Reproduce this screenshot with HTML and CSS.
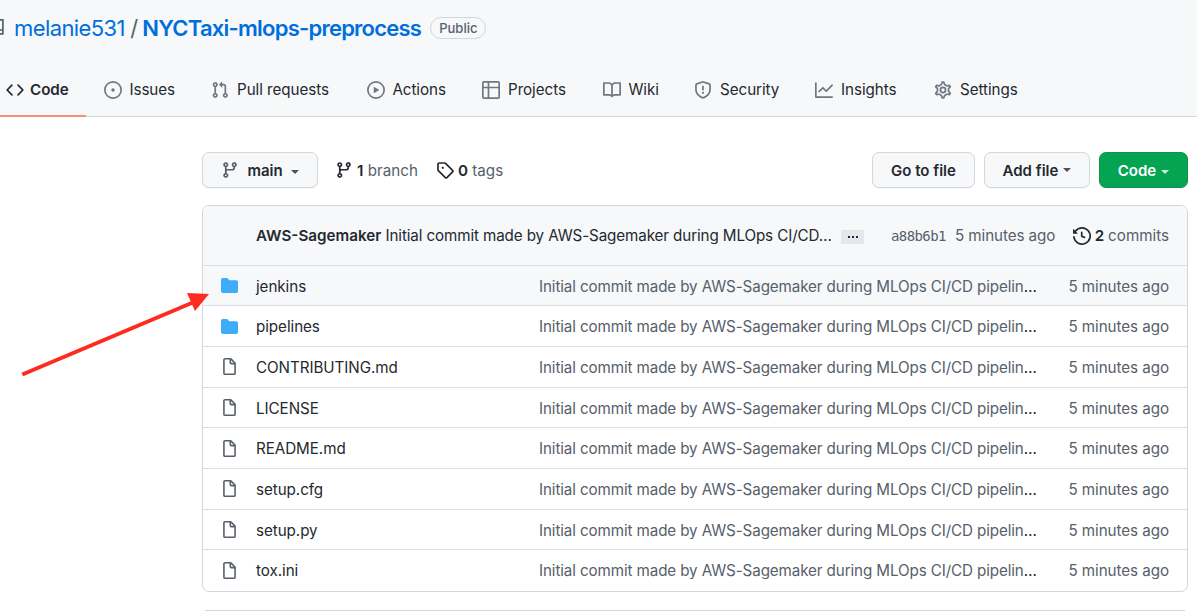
FILE: index.html
```html
<!DOCTYPE html>
<html lang="en">
<head>
<meta charset="utf-8">
<title>melanie531/NYCTaxi-mlops-preprocess</title>
<link rel="stylesheet" href="styles.css">
</head>
<body>
<svg class="defs" width="0" height="0">
  <symbol id="branch" viewBox="0 0 16 16"><path fill-rule="evenodd" d="M11.75 2.5a.75.75 0 100 1.5.75.75 0 000-1.5zm-2.25.75a2.25 2.25 0 113 2.122V6A2.5 2.5 0 0110 8.5H6a1 1 0 00-1 1v1.128a2.251 2.251 0 11-1.5 0V5.372a2.25 2.25 0 111.5 0v1.836A2.492 2.492 0 016 7h4a1 1 0 001-1v-.628A2.25 2.25 0 019.5 3.25zM4.25 12a.75.75 0 100 1.5.75.75 0 000-1.5zM3.5 3.25a.75.75 0 111.5 0 .75.75 0 01-1.5 0z"/></symbol>
  <symbol id="folder" viewBox="0 0 16 16"><path d="M1.75 1A1.75 1.75 0 000 2.75v10.5C0 14.216.784 15 1.75 15h12.5A1.75 1.75 0 0016 13.25v-8.5A1.75 1.75 0 0014.25 3h-6.5a.25.25 0 01-.2-.1l-.9-1.2c-.33-.44-.85-.7-1.4-.7h-3.5z"/></symbol>
  <symbol id="file" viewBox="0 0 16 16"><path fill-rule="evenodd" d="M3.75 1.5a.25.25 0 00-.25.25v12.5c0 .138.112.25.25.25h8.5a.25.25 0 00.25-.25V6H9.75A1.75 1.75 0 018 4.25V1.5H3.75zm5.75.56v2.19c0 .138.112.25.25.25h2.19L9.5 2.06zM2 1.75C2 .784 2.784 0 3.75 0h5.086c.464 0 .909.184 1.237.513l3.414 3.414c.329.328.513.773.513 1.237v9.086A1.75 1.75 0 0112.25 16h-8.5A1.75 1.75 0 012 14.25V1.75z"/></symbol>
</svg>

<header class="head">
  <div class="title">
    <svg class="icon repo" viewBox="0 0 16 16"><path fill-rule="evenodd" d="M2 2.5A2.5 2.5 0 014.500 0h8.750a.75.75 0 01.75.75v12.500a.75.75 0 01-.75.75h-2.500a.75.75 0 110-1.500h1.750v-2h-8a1 1 0 00-.714 1.700.75.75 0 01-1.072 1.050A2.495 2.495 0 012 11.500v-9zm10.500-1h-8a1 1 0 00-1 1v6.708A2.486 2.486 0 014.500 9h8V1.500z"/></svg>
    <a class="owner">melanie531</a><span class="slash">/</span><a class="name">NYCTaxi-mlops-preprocess</a>
    <span class="public">Public</span>
  </div>
  <nav class="tabs">
    <a class="tab t-code"><svg class="icon" viewBox="0 0 16 16"><path d="M4.72 3.22a.75.75 0 011.06 1.06L2.06 8l3.72 3.72a.75.75 0 11-1.06 1.06L.47 8.53a.75.75 0 010-1.06l4.25-4.25zm6.56 0a.75.75 0 10-1.06 1.06L13.94 8l-3.72 3.72a.75.75 0 101.06 1.06l4.25-4.25a.75.75 0 000-1.06l-4.25-4.25z"/></svg>Code</a>
    <a class="tab t-issues"><svg class="icon" viewBox="0 0 16 16"><path fill-rule="evenodd" d="M8 9.5a1.5 1.5 0 100-3 1.5 1.5 0 000 3zM8 0a8 8 0 100 16A8 8 0 008 0zM1.5 8a6.5 6.5 0 1113 0 6.5 6.5 0 01-13 0z"/></svg>Issues</a>
    <a class="tab t-pulls"><svg class="icon" viewBox="0 0 16 16"><path fill-rule="evenodd" d="M7.177 3.073L9.573.677A.25.25 0 0110 .854v4.792a.25.25 0 01-.427.177L7.177 3.427a.25.25 0 010-.354zM3.75 2.5a.75.75 0 100 1.5.75.75 0 000-1.5zm-2.25.75a2.25 2.25 0 113 2.122v5.256a2.251 2.251 0 11-1.5 0V5.372A2.25 2.25 0 011.5 3.25zM11 2.5h-1V4h1a1 1 0 011 1v5.628a2.251 2.251 0 101.5 0V5A2.5 2.5 0 0011 2.5zm1 10.25a.75.75 0 111.5 0 .75.75 0 01-1.5 0zM3.75 12a.75.75 0 100 1.5.75.75 0 000-1.5z"/></svg>Pull requests</a>
    <a class="tab t-actions"><svg class="icon" viewBox="0 0 16 16"><path fill-rule="evenodd" d="M1.5 8a6.5 6.5 0 1113 0 6.5 6.5 0 01-13 0zM8 0a8 8 0 100 16A8 8 0 008 0zM6.379 5.227A.25.25 0 006 5.442v5.117a.25.25 0 00.379.214l4.264-2.559a.25.25 0 000-.428L6.379 5.227z"/></svg>Actions</a>
    <a class="tab t-projects"><svg class="icon" viewBox="0 0 16 16"><path fill-rule="evenodd" d="M0 1.75C0 .784.784 0 1.75 0h12.5C15.216 0 16 .784 16 1.75v12.5A1.75 1.75 0 0114.25 16H1.75A1.75 1.75 0 010 14.25V1.75zM1.5 6.5v7.75c0 .138.112.25.25.25H5v-8H1.5zM5 5H1.5V1.75a.25.25 0 01.25-.25H5V5zm1.5 1.5v8h7.75a.25.25 0 00.25-.25V6.5h-8zm8-1.5h-8V1.5h7.75a.25.25 0 01.25.25V5z"/></svg>Projects</a>
    <a class="tab t-wiki"><svg class="icon" viewBox="0 0 16 16"><path fill-rule="evenodd" d="M0 1.75A.75.75 0 01.75 1h4.253c1.227 0 2.317.59 3 1.501A3.744 3.744 0 0111.006 1h4.245a.75.75 0 01.75.75v10.5a.75.75 0 01-.75.75h-4.507a2.25 2.25 0 00-1.591.659l-.622.621a.75.75 0 01-1.06 0l-.622-.621A2.25 2.25 0 005.258 13H.75a.75.75 0 01-.75-.75V1.75zm8.755 3a2.25 2.25 0 012.25-2.25H14.5v9h-3.757c-.71 0-1.4.201-1.992.572l.004-7.322zm-1.504 7.324l.004-5.073-.002-2.253A2.25 2.25 0 005.003 2.5H1.5v9h3.757a3.75 3.75 0 011.994.574z"/></svg>Wiki</a>
    <a class="tab t-security"><svg class="icon" viewBox="0 0 16 16"><path fill-rule="evenodd" d="M7.467.133a1.75 1.75 0 011.066 0l5.25 1.68A1.75 1.75 0 0115 3.48V7c0 1.566-.32 3.182-1.303 4.682-.983 1.498-2.585 2.813-5.032 3.855a1.7 1.7 0 01-1.33 0c-2.447-1.042-4.049-2.357-5.032-3.855C1.32 10.182 1 8.566 1 7V3.48a1.75 1.75 0 011.217-1.667l5.25-1.68zm.61 1.429a.25.25 0 00-.153 0l-5.25 1.68a.25.25 0 00-.174.238V7c0 1.358.275 2.666 1.057 3.86.784 1.194 2.121 2.34 4.366 3.297a.2.2 0 00.154 0c2.245-.956 3.582-2.104 4.366-3.298C13.225 9.666 13.5 8.36 13.5 7V3.48a.25.25 0 00-.174-.237l-5.25-1.68zM9 10.5a1 1 0 11-2 0 1 1 0 012 0zm-.25-5.75a.75.75 0 10-1.5 0v3a.75.75 0 001.5 0v-3z"/></svg>Security</a>
    <a class="tab t-insights"><svg class="icon" viewBox="0 0 16 16"><path d="M1.5 1.75a.75.75 0 00-1.5 0v12.5c0 .414.336.75.75.75h14.5a.75.75 0 000-1.5H1.5V1.75zm14.28 2.53a.75.75 0 00-1.06-1.06L10 7.94 7.53 5.47a.75.75 0 00-1.06 0L3.22 8.72a.75.75 0 001.06 1.06L7 7.06l2.47 2.47a.75.75 0 001.06 0l5.25-5.25z"/></svg>Insights</a>
    <a class="tab t-settings"><svg class="icon" viewBox="0 0 16 16"><g fill="none" stroke="currentColor" stroke-width="1.4" transform="translate(8 8) scale(1.09) translate(-8 -8)"><path d="M7.429 1.525a6.593 6.593 0 011.142 0c.036.003.108.036.137.146l.289 1.105c.147.56.55.967.997 1.189.174.086.341.183.501.29.417.278.97.423 1.53.27l1.102-.303c.11-.03.175.016.195.046.219.31.41.641.573.989.014.031.022.11-.059.19l-.815.806c-.411.406-.562.957-.53 1.456a4.588 4.588 0 010 .582c-.032.499.119 1.05.53 1.456l.815.806c.08.08.073.159.059.19a6.494 6.494 0 01-.573.99c-.02.029-.086.074-.195.045l-1.103-.303c-.559-.153-1.112-.008-1.529.27-.16.107-.327.204-.5.29-.449.222-.851.628-.998 1.189l-.289 1.105c-.029.11-.101.143-.137.146a6.613 6.613 0 01-1.142 0c-.036-.003-.108-.037-.137-.146l-.289-1.105c-.147-.56-.55-.967-.997-1.189a4.502 4.502 0 01-.501-.29c-.417-.278-.97-.423-1.53-.27l-1.102.303c-.11.03-.175-.016-.195-.046a6.492 6.492 0 01-.573-.989c-.014-.031-.022-.11.059-.19l.815-.806c.411-.406.562-.957.53-1.456a4.587 4.587 0 010-.582c.032-.499-.119-1.05-.53-1.456l-.815-.806c-.08-.08-.073-.159-.059-.19a6.44 6.44 0 01.573-.99c.02-.029.086-.075.195-.045l1.103.303c.559.153 1.112.008 1.529-.27.16-.107.327-.204.5-.29.449-.222.851-.628.998-1.189l.289-1.105c.029-.11.101-.143.137-.146z"/><circle cx="8" cy="8" r="2.1"/></g></svg>Settings</a>
  </nav>
</header>

<main class="content">
  <div class="toolbar">
    <button class="btn b-main"><svg class="icon"><use href="#branch"/></svg><span>main</span><i class="caret"></i></button>
    <span class="stat s-branch"><svg class="icon"><use href="#branch"/></svg><span><b>1</b> branch</span></span>
    <span class="stat s-tags"><svg class="icon" viewBox="0 0 16 16"><path fill-rule="evenodd" d="M2.5 7.775V2.75a.25.25 0 01.25-.25h5.025a.25.25 0 01.177.073l6.25 6.25a.25.25 0 010 .354l-5.025 5.025a.25.25 0 01-.354 0l-6.25-6.25a.25.25 0 01-.073-.177zm-1.5 0V2.75C1 1.784 1.784 1 2.75 1h5.025c.464 0 .91.184 1.238.513l6.25 6.25a1.75 1.75 0 010 2.474l-5.026 5.026a1.75 1.75 0 01-2.474 0l-6.25-6.25A1.75 1.75 0 011 7.775zM6 5a1 1 0 100 2 1 1 0 000-2z"/></svg><span><b>0</b> tags</span></span>
    <div class="actions">
      <button class="btn b-goto"><span>Go to file</span></button>
      <button class="btn b-add"><span>Add file</span><i class="caret"></i></button>
      <button class="btn b-code"><span>Code</span><i class="caret"></i></button>
    </div>
  </div>

  <section class="box">
    <div class="commit">
      <span class="msg"><b>AWS-Sagemaker</b> <span class="subject">Initial commit made by AWS-Sagemaker during MLOps CI/CD…</span></span>
      <span class="more"><i></i><i></i><i></i></span>
      <span class="sha">a88b6b1</span>
      <span class="ago">5 minutes ago</span>
      <span class="commits"><svg class="icon" viewBox="0 0 16 16"><path d="M1.643 3.143L.427 1.927A.25.25 0 000 2.104V5.75c0 .138.112.25.25.25h3.646a.25.25 0 00.177-.427L2.715 4.215a6.5 6.5 0 11-1.18 4.458.75.75 0 10-1.493.154 8.001 8.001 0 101.6-5.684zM7.75 4a.75.75 0 01.75.75v2.992l2.028.812a.75.75 0 01-.557 1.392l-2.5-1A.75.75 0 017 8.25v-3.5A.75.75 0 017.75 4z"/></svg><b>2</b> commits</span>
    </div>
    <div class="row hover"><svg class="icon folder"><use href="#folder"/></svg><a class="fname">jenkins</a><span class="fmsg">Initial commit made by AWS-Sagemaker during MLOps CI/CD pipelin<em>…</em></span><span class="when">5 minutes ago</span></div>
    <div class="row"><svg class="icon folder"><use href="#folder"/></svg><a class="fname">pipelines</a><span class="fmsg">Initial commit made by AWS-Sagemaker during MLOps CI/CD pipelin<em>…</em></span><span class="when">5 minutes ago</span></div>
    <div class="row"><svg class="icon"><use href="#file"/></svg><a class="fname">CONTRIBUTING.md</a><span class="fmsg">Initial commit made by AWS-Sagemaker during MLOps CI/CD pipelin<em>…</em></span><span class="when">5 minutes ago</span></div>
    <div class="row"><svg class="icon"><use href="#file"/></svg><a class="fname">LICENSE</a><span class="fmsg">Initial commit made by AWS-Sagemaker during MLOps CI/CD pipelin<em>…</em></span><span class="when">5 minutes ago</span></div>
    <div class="row"><svg class="icon"><use href="#file"/></svg><a class="fname">README.md</a><span class="fmsg">Initial commit made by AWS-Sagemaker during MLOps CI/CD pipelin<em>…</em></span><span class="when">5 minutes ago</span></div>
    <div class="row"><svg class="icon"><use href="#file"/></svg><a class="fname">setup.cfg</a><span class="fmsg">Initial commit made by AWS-Sagemaker during MLOps CI/CD pipelin<em>…</em></span><span class="when">5 minutes ago</span></div>
    <div class="row"><svg class="icon"><use href="#file"/></svg><a class="fname">setup.py</a><span class="fmsg">Initial commit made by AWS-Sagemaker during MLOps CI/CD pipelin<em>…</em></span><span class="when">5 minutes ago</span></div>
    <div class="row"><svg class="icon"><use href="#file"/></svg><a class="fname">tox.ini</a><span class="fmsg">Initial commit made by AWS-Sagemaker during MLOps CI/CD pipelin<em>…</em></span><span class="when">5 minutes ago</span></div>
  </section>
  <section class="readme"></section>
</main>

<svg class="arrow" viewBox="0 0 200 100"><path d="M2.300 84.500L174 12" stroke="#ff2a20" stroke-width="4" fill="none"/><path d="M167 3L189 4L175 21Z" fill="#ff2a20"/></svg>
</body>
</html>
```
FILE: styles.css
```css
* { box-sizing: border-box; }
html, body { height: 100%; overflow: hidden; }
body {
  position: relative;
  margin: 0;
  background: #fff;
  color: #24292f;
  font-family: Inter, "Liberation Sans", sans-serif;
  font-size: 15.2px;
  line-height: 22px;
  white-space: nowrap;
}
b { font-weight: 600; }
.defs { position: absolute; }
.icon { width: 18px; height: 18px; flex: none; fill: currentColor; }

.head { height: 117px; background: #f6f8fa; border-bottom: 1px solid #d0d7de; }
.title { display: flex; align-items: center; height: 64px; padding-bottom: 8px; font-size: 22px; }
.repo { margin-left: -12px; margin-right: 8px; color: #57606a; }
.owner, .name { color: #006edb; }
.owner { letter-spacing: -.6px; }
.name { font-weight: 600; letter-spacing: -.76px; }
.slash { margin: 0 4px 0 5.5px; color: #57606a; }
.public {
  margin-left: 9px;
  padding: 0 8px;
  height: 22px;
  margin-bottom: 1px;
  border: 1px solid #d0d7de;
  border-radius: 11px;
  color: #57606a;
  font-size: 13px;
  font-weight: 500;
  line-height: 20px;
}
.tabs { display: flex; height: 53px; padding-left: 6px; }
.tab { display: flex; flex: none; gap: 8px; height: 53px; padding-bottom: 1px; align-items: center; letter-spacing: -.05px; }
.tab .icon { color: #6e7781; }
.t-code { box-sizing: content-box; width: 80px; height: 50px; margin: 0 18px 0 -6px; padding: 1px 0 0 6px; gap: 6px; border-bottom: 2px solid #fd8c73; font-weight: 600; }
.t-code .icon { color: #24292f; }
.t-issues { width: 107px; gap: 7.4px; }
.t-pulls { width: 156px; }
.t-actions { width: 115px; gap: 7.4px; }
.t-projects { width: 121px; }
.t-wiki { width: 91px; gap: 7.4px; }
.t-security { width: 121px; }
.t-insights { width: 119px; }

.content { width: 986px; margin-left: 202px; padding-top: 35px; }
.toolbar { display: flex; align-items: center; height: 36px; margin-bottom: 17px; }
.btn {
  display: flex;
  align-items: center;
  justify-content: center;
  height: 36px;
  padding: 0;
  border: 1px solid #d3d7db;
  border-radius: 7px;
  background: #f6f8fa;
  box-shadow: 0 1px 0 rgba(27, 31, 36, .04);
  color: #24292f;
  font: 600 15px/22px Inter, sans-serif;
}
.btn span, .stat span { padding-top: 2px; }
.caret { border: 4.5px solid transparent; border-top-color: currentColor; border-bottom: 0; opacity: .8; }
.b-main { width: 116px; }
.b-main .icon { margin-right: 8px; color: #57606a; }
.b-main .caret { margin: 3px 0 0 8px; }
.stat { display: flex; align-items: center; gap: 4px; color: #57606a; }
.stat .icon, .stat b, .commits .icon, .commits b { color: #24292f; }
.s-branch { width: 101px; margin-left: 17px; }
.actions { display: flex; gap: 9px; margin-left: auto; }
.b-goto { width: 103px; }
.b-add { width: 106px; }
.b-add .caret { margin-left: 5px; }
.b-code { width: 89px; border-color: #139049; background: #04a453; color: #fff; }
.b-code .caret { margin: 3px 0 0 5px; }

.box { height: 387px; border: 1px solid #d0d7de; border-radius: 7px; overflow: hidden; }
.commit { display: flex; align-items: center; height: 58.6px; padding: 1px 18px 0 53px; background: #f6f8fa; }
.msg { width: 585px; }
.subject { letter-spacing: -.11px; }
.more { display: flex; align-items: center; justify-content: center; gap: 2px; width: 23px; height: 14px; margin-top: 2px; background: #e4e8ed; }
.more i { width: 2px; height: 2px; background: #24292f; }
.sha { width: 64px; margin-left: 27px; color: #57606a; font: 14px/22px "DejaVu Sans Mono", monospace; letter-spacing: -.6px; }
.ago { color: #57606a; letter-spacing: -.08px; }
.commits { display: flex; align-items: center; gap: 4px; margin-left: auto; color: #57606a; }
.row { display: flex; align-items: center; height: 40.7px; padding: 0 18px 0 18px; border-top: 1px solid #d8dee4; }
.row .icon { width: 17px; height: 17px; margin-right: 18px; color: #57606a; }
.row .folder { color: #3eabfb; }
.row a, .row span { padding-top: 2px; }
.row.hover { background: #f6f8fa; }
.row.hover a, .row.hover span { padding-top: 3px; }
.fname { width: 283px; letter-spacing: -.06px; }
.fmsg { color: #57606a; letter-spacing: -.11px; }
.fmsg em { color: #24292f; font-style: normal; }
.when { margin-left: auto; color: #57606a; letter-spacing: -.06px; }
.readme { height: 1px; margin: 18px 3px 0; background: #d0d7de; }
.arrow { position: absolute; left: 20px; top: 290px; width: 200px; height: 100px; }
```
